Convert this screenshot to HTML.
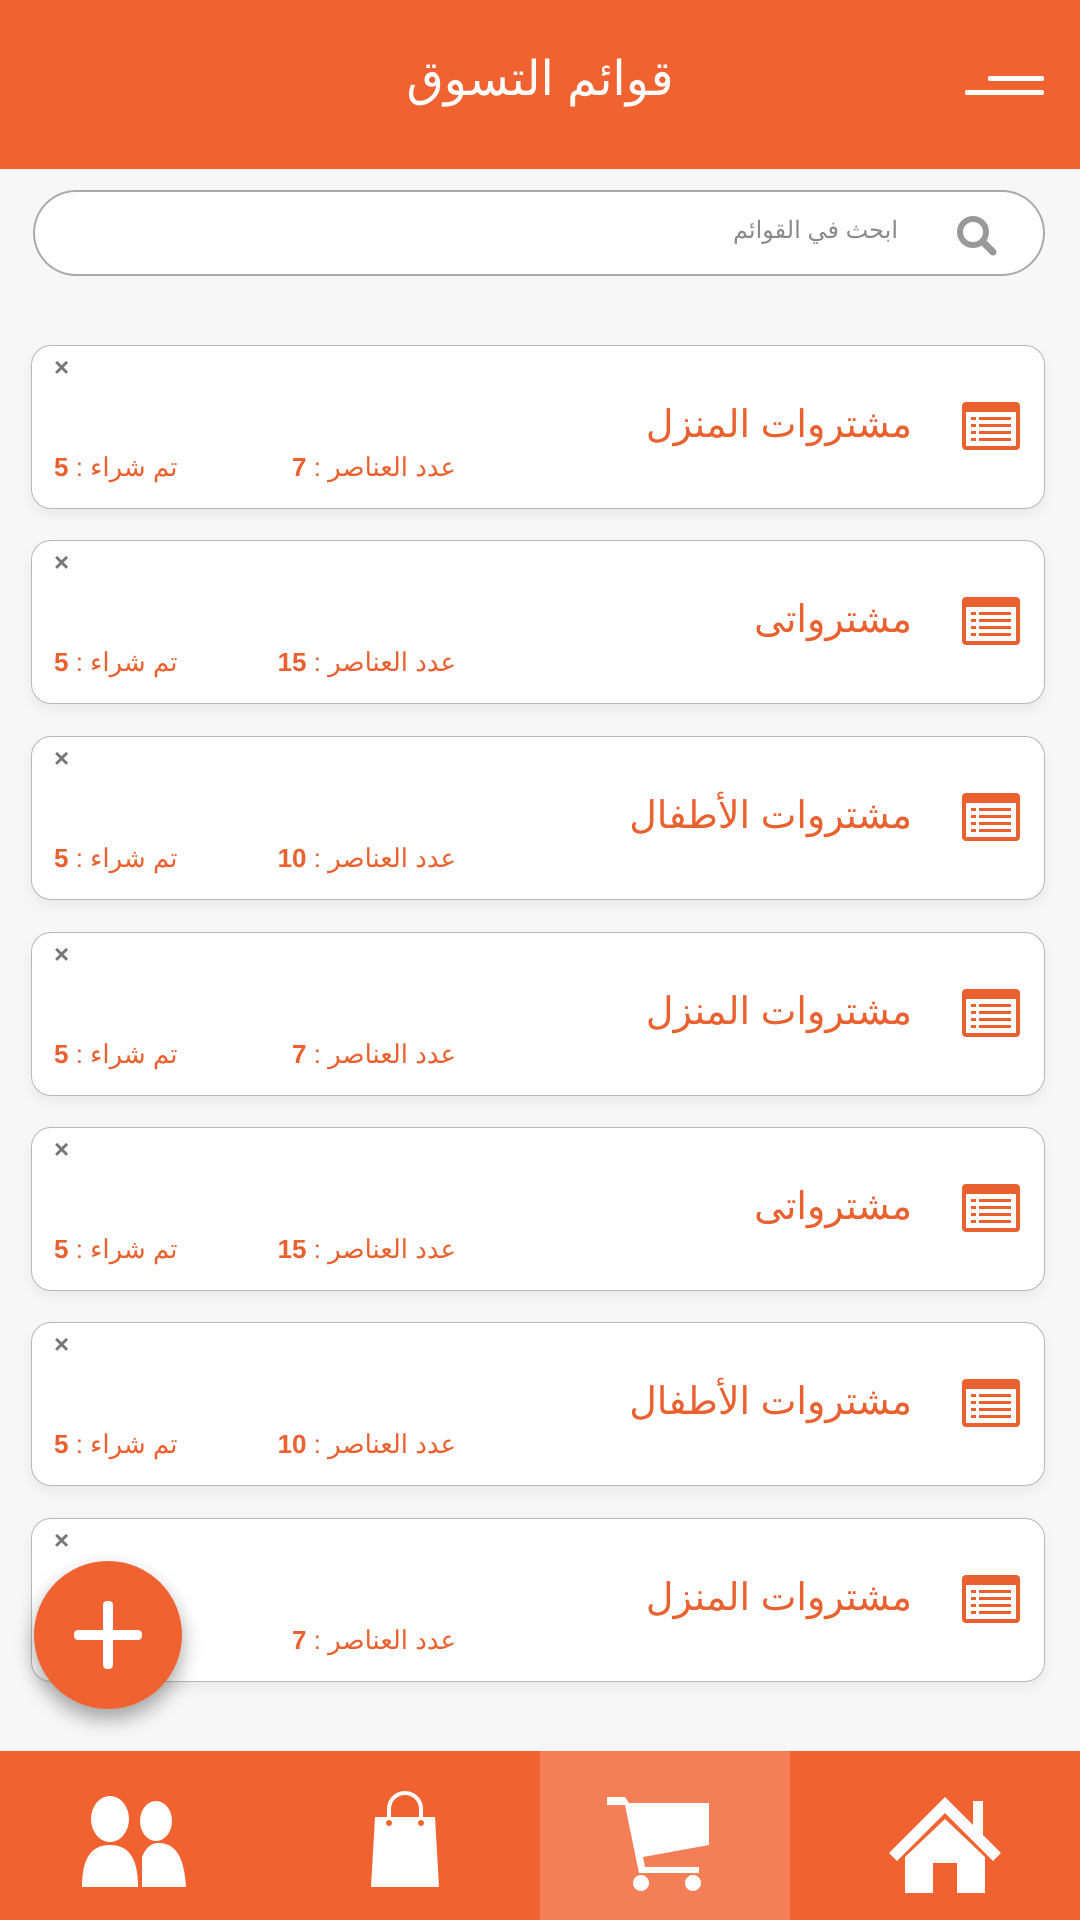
<!DOCTYPE html>
<html><head><meta charset="utf-8"><style>
*{margin:0;padding:0;box-sizing:border-box}
body{width:1080px;height:1920px;position:relative;background:#f7f7f7;font-family:"Liberation Sans","Noto Sans CJK SC",sans-serif;overflow:hidden}
.hdr{position:absolute;left:0;top:0;width:1080px;height:169px;background:#F06331}
.hdr h1{position:absolute;left:0;right:0;top:50px;text-align:center;color:#fff;font-size:48px;font-weight:normal;line-height:60px}
.hl{position:absolute;height:5px;background:#fff;border-radius:2px}
.search{position:absolute;left:33px;top:190px;width:1012px;height:86px;border:2px solid #aaa;border-radius:43px;background:#fff}
.search span{position:absolute;right:145px;top:24px;font-size:24px;color:#8a8a8a;direction:rtl}
.card{position:absolute;left:31px;width:1014px;height:164px;background:#fff;border:1.5px solid #b8b8b8;border-radius:20px;box-shadow:0 6px 14px rgba(0,0,0,.06)}
.x{position:absolute;left:22px;top:6px;color:#777;font-size:26px;font-weight:bold}
.ic{position:absolute;right:24px;top:56px}
.t{position:absolute;right:132px;top:56px;color:#E8612F;font-size:38px;direction:rtl;white-space:nowrap}
.s1{position:absolute;right:588px;top:106px;color:#E8612F;font-size:26px;direction:rtl;white-space:nowrap}
.s2{position:absolute;left:22px;top:106px;color:#E8612F;font-size:26px;direction:rtl;white-space:nowrap}
b{font-weight:bold}
.fab{position:absolute;left:34px;top:1561px;width:148px;height:148px;border-radius:50%;background:#F06331;box-shadow:0 10px 20px rgba(0,0,0,.35)}
.nav{position:absolute;left:0;top:1751px;width:1080px;height:169px;background:#F06331}
.act{position:absolute;left:540px;top:0;width:250px;height:169px;background:#F47F56}
</style></head><body>
<div class="hdr"><h1>قوائم التسوق</h1>
<div class="hl" style="left:988px;top:76px;width:56px"></div>
<div class="hl" style="left:965px;top:90px;width:79px"></div></div>
<div class="search"><span>ابحث في القوائم</span>
<svg style="position:absolute;left:918px;top:20px" width="48" height="48" viewBox="0 0 48 48"><circle cx="20" cy="20" r="13" fill="none" stroke="#999" stroke-width="6"/><line x1="30" y1="30" x2="40" y2="40" stroke="#999" stroke-width="7" stroke-linecap="round"/></svg></div>

<div id="cards"></div>
<script>
var data=[["مشتروات المنزل","7"],["مشترواتى","15"],["مشتروات الأطفال","10"],["مشتروات المنزل","7"],["مشترواتى","15"],["مشتروات الأطفال","10"],["مشتروات المنزل","7"]];
var tops=[345,540,736,932,1127,1322,1518];var h="";
var icon='<svg width="58" height="48" viewBox="0 0 58 48"><rect x="0" y="0" width="58" height="48" rx="4" fill="#E8612F"/><rect x="4" y="10" width="50" height="34" fill="#fff"/><g fill="#E8612F"><rect x="9" y="15" width="5" height="3"/><rect x="17" y="15" width="32" height="3"/><rect x="9" y="22" width="5" height="3"/><rect x="17" y="22" width="32" height="3"/><rect x="9" y="29" width="5" height="3"/><rect x="17" y="29" width="32" height="3"/><rect x="9" y="36" width="5" height="3"/><rect x="17" y="36" width="32" height="3"/></g></svg>';
for(var i=0;i<7;i++){h+='<div class="card" style="top:'+tops[i]+'px"><div class="x">×</div><div class="ic">'+icon+'</div><div class="t">'+data[i][0]+'</div><div class="s1">عدد العناصر : <b>'+data[i][1]+'</b></div><div class="s2">تم شراء : <b>5</b></div></div>';}
document.getElementById('cards').innerHTML=h;
</script>
<div class="fab"><svg width="148" height="148" viewBox="0 0 148 148"><rect x="40" y="69" width="68" height="10" rx="4" fill="#fff"/><rect x="69" y="40" width="10" height="68" rx="4" fill="#fff"/></svg></div>

<div class="nav"><div class="act"></div>
<svg style="position:absolute;left:80px;top:44px" width="115" height="95" viewBox="0 0 115 95"><g fill="#fff"><ellipse cx="30" cy="24" rx="19" ry="23"/><ellipse cx="76" cy="26" rx="16" ry="20"/><path d="M2 92 C2 62 12 50 30 50 C48 50 58 62 58 92Z"/><path d="M62 92 L62 62 C66 52 72 48 78 48 C96 48 104 62 106 92Z"/></g></svg>
<svg style="position:absolute;left:365px;top:40px" width="80" height="100" viewBox="0 0 80 100"><path d="M24 30 V18 A16 16 0 0 1 56 18 V30" fill="none" stroke="#fff" stroke-width="4"/><path d="M10 26 H70 L74 96 H6Z" fill="#fff"/><circle cx="24" cy="32" r="3" fill="#F06331"/><circle cx="56" cy="32" r="3" fill="#F06331"/></svg>
<svg style="position:absolute;left:605px;top:44px" width="105" height="100" viewBox="0 0 105 100"><g fill="#fff"><path d="M2 2 H20 L24 8 H104 V50 L38 62 L40 72 H94 V78 H34 L20 10 H2Z"/><circle cx="36" cy="88" r="8"/><circle cx="88" cy="88" r="8"/></g></svg>
<svg style="position:absolute;left:885px;top:44px" width="120" height="100" viewBox="0 0 120 100"><g fill="#fff"><path d="M60 2 L4 58 L12 66 L60 18 L108 66 L116 58 L98 40 V6 H88 V30Z"/><path d="M20 62 L60 24 L100 62 V98 H72 V68 H48 V98 H20Z"/></g></svg>
</div>
</body></html>
